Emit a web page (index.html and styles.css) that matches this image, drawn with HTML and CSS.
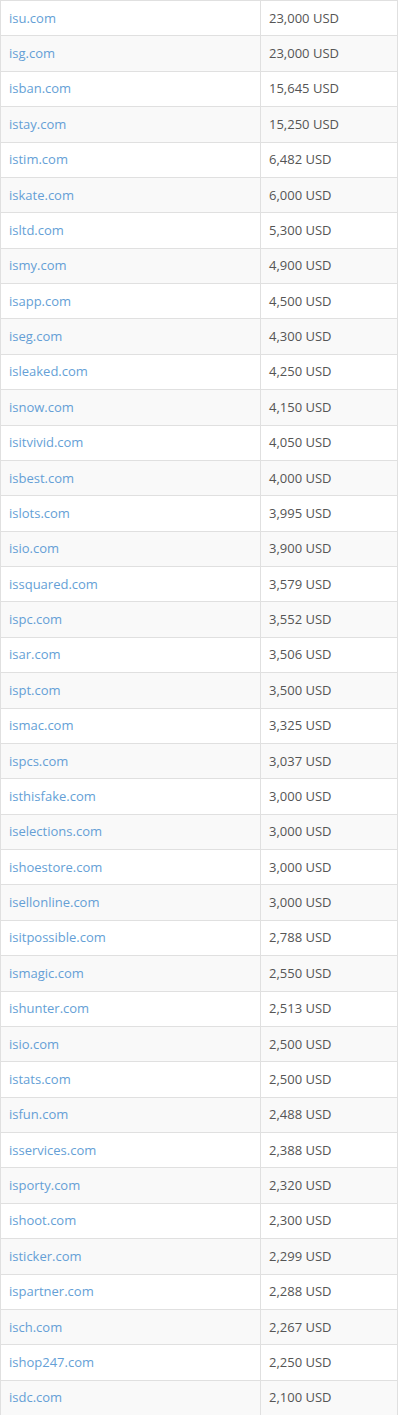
FILE: index.html
```html
<!DOCTYPE html>
<html>
<head>
<meta charset="utf-8">
<link rel="stylesheet" href="styles.css">
</head>
<body>
<table class="domains">
<tbody>
<tr><td><a href="#">isu.com</a></td><td>23,000 USD</td></tr>
<tr><td><a href="#">isg.com</a></td><td>23,000 USD</td></tr>
<tr><td><a href="#">isban.com</a></td><td>15,645 USD</td></tr>
<tr><td><a href="#">istay.com</a></td><td>15,250 USD</td></tr>
<tr><td><a href="#">istim.com</a></td><td>6,482 USD</td></tr>
<tr><td><a href="#">iskate.com</a></td><td>6,000 USD</td></tr>
<tr><td><a href="#">isltd.com</a></td><td>5,300 USD</td></tr>
<tr><td><a href="#">ismy.com</a></td><td>4,900 USD</td></tr>
<tr><td><a href="#">isapp.com</a></td><td>4,500 USD</td></tr>
<tr><td><a href="#">iseg.com</a></td><td>4,300 USD</td></tr>
<tr><td><a href="#">isleaked.com</a></td><td>4,250 USD</td></tr>
<tr><td><a href="#">isnow.com</a></td><td>4,150 USD</td></tr>
<tr><td><a href="#">isitvivid.com</a></td><td>4,050 USD</td></tr>
<tr><td><a href="#">isbest.com</a></td><td>4,000 USD</td></tr>
<tr><td><a href="#">islots.com</a></td><td>3,995 USD</td></tr>
<tr><td><a href="#">isio.com</a></td><td>3,900 USD</td></tr>
<tr><td><a href="#">issquared.com</a></td><td>3,579 USD</td></tr>
<tr><td><a href="#">ispc.com</a></td><td>3,552 USD</td></tr>
<tr><td><a href="#">isar.com</a></td><td>3,506 USD</td></tr>
<tr><td><a href="#">ispt.com</a></td><td>3,500 USD</td></tr>
<tr><td><a href="#">ismac.com</a></td><td>3,325 USD</td></tr>
<tr><td><a href="#">ispcs.com</a></td><td>3,037 USD</td></tr>
<tr><td><a href="#">isthisfake.com</a></td><td>3,000 USD</td></tr>
<tr><td><a href="#">iselections.com</a></td><td>3,000 USD</td></tr>
<tr><td><a href="#">ishoestore.com</a></td><td>3,000 USD</td></tr>
<tr><td><a href="#">isellonline.com</a></td><td>3,000 USD</td></tr>
<tr><td><a href="#">isitpossible.com</a></td><td>2,788 USD</td></tr>
<tr><td><a href="#">ismagic.com</a></td><td>2,550 USD</td></tr>
<tr><td><a href="#">ishunter.com</a></td><td>2,513 USD</td></tr>
<tr><td><a href="#">isio.com</a></td><td>2,500 USD</td></tr>
<tr><td><a href="#">istats.com</a></td><td>2,500 USD</td></tr>
<tr><td><a href="#">isfun.com</a></td><td>2,488 USD</td></tr>
<tr><td><a href="#">isservices.com</a></td><td>2,388 USD</td></tr>
<tr><td><a href="#">isporty.com</a></td><td>2,320 USD</td></tr>
<tr><td><a href="#">ishoot.com</a></td><td>2,300 USD</td></tr>
<tr><td><a href="#">isticker.com</a></td><td>2,299 USD</td></tr>
<tr><td><a href="#">ispartner.com</a></td><td>2,288 USD</td></tr>
<tr><td><a href="#">isch.com</a></td><td>2,267 USD</td></tr>
<tr><td><a href="#">ishop247.com</a></td><td>2,250 USD</td></tr>
<tr><td><a href="#">isdc.com</a></td><td>2,100 USD</td></tr>
</tbody>
</table>
</body>
</html>
```
FILE: styles.css
```css
html, body {
  margin: 0;
  padding: 0;
  background: #ffffff;
}
body {
  font-family: "Open Sans", "Liberation Sans", sans-serif;
  font-size: 13px;
  color: #555555;
}
.domains {
  width: 398px;
  border-collapse: collapse;
  table-layout: fixed;
}
.domains td {
  height: 35.375px;
  box-sizing: border-box;
  padding: 0 8px 1px 8px;
  border: 1px solid #e0e0e0;
  vertical-align: middle;
  line-height: 18px;
  white-space: nowrap;
}
.domains td:first-child {
  width: 260px;
}
.domains tr:nth-child(even) td {
  background: #f9f9f9;
}
.domains a {
  color: #659fd6;
  text-decoration: none;
}
```
